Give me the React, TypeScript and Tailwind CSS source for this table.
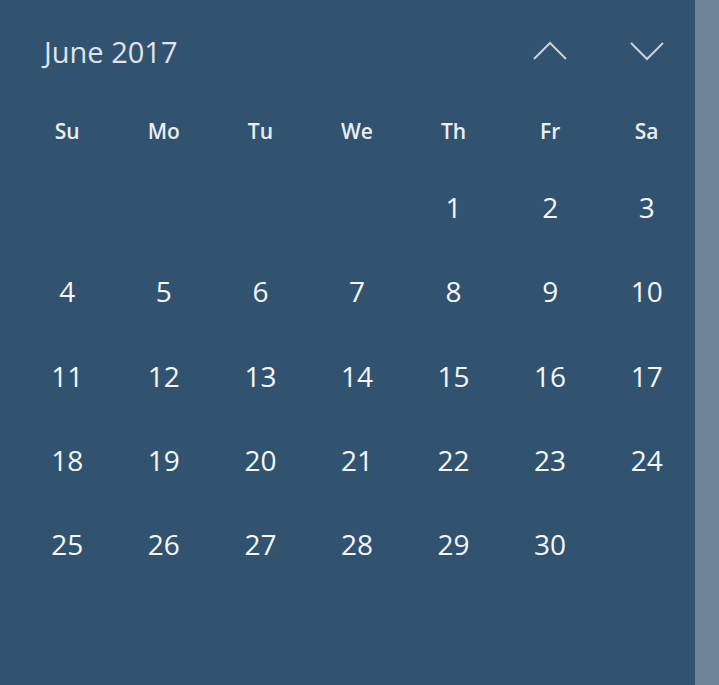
import React from "react";

const weekdays = ["Su", "Mo", "Tu", "We", "Th", "Fr", "Sa"];
const weeks: (number | null)[][] = [
  [null, null, null, null, 1, 2, 3],
  [4, 5, 6, 7, 8, 9, 10],
  [11, 12, 13, 14, 15, 16, 17],
  [18, 19, 20, 21, 22, 23, 24],
  [25, 26, 27, 28, 29, 30, null],
];

export default function App() {
  return (
    <div
      className="flex h-[685px] w-[719px] overflow-hidden"
      style={{ fontFamily: '"Open Sans", "Noto Sans", sans-serif' }}
    >
      <div className="flex-1 bg-[#32536f] flex flex-col">
        <div className="flex h-[98px] items-start">
          <div className="flex-1 pl-[44px] pt-[34px] text-[29px] leading-[36px] text-[#dfe5eb]">
            June 2017
          </div>
          <div className="flex w-[193px] pt-[41px]">
            <div className="flex w-1/2 justify-center">
              <svg width="36" height="20" viewBox="0 0 36 20" fill="none">
                <path d="M2 18 L18 2 L34 18" stroke="#c9d2db" strokeWidth="2" />
              </svg>
            </div>
            <div className="flex w-1/2 justify-center">
              <svg width="36" height="20" viewBox="0 0 36 20" fill="none">
                <path d="M2 2 L18 18 L34 2" stroke="#c9d2db" strokeWidth="2" />
              </svg>
            </div>
          </div>
        </div>
        <div className="pl-[19px]">
          <div className="grid grid-cols-7 h-[68px] items-center">
            {weekdays.map((d) => (
              <div key={d} className="text-center text-[21px] font-semibold text-[#e9eef2]">
                {d}
              </div>
            ))}
          </div>
          {weeks.map((w, i) => (
            <div key={i} className="grid grid-cols-7 h-[84.3px] items-center">
              {w.map((n, j) => (
                <div key={j} className="text-center text-[28px] leading-[40px] text-[#f4f6f8] -translate-y-px">
                  {n ?? ""}
                </div>
              ))}
            </div>
          ))}
        </div>
      </div>
      <div className="w-[24px] bg-[#6e8599]" />
    </div>
  );
}
